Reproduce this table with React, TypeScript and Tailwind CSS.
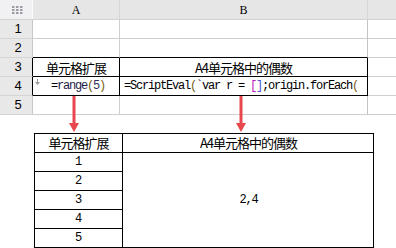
const cjk = "font-['Noto_Sans_CJK_SC',sans-serif]";
const mono = "font-['Liberation_Mono',monospace] tracking-[-1.2px]";

function CornerDots() {
  return (
    <svg width="11" height="8" viewBox="0 0 11 8" className="mt-[1px]">
      {[0, 1, 2].map((r) =>
        [0, 1, 2].map((c) => (
          <rect key={`${r}-${c}`} x={c * 4} y={r * 3} width="2.5" height="2" fill="#9c9ca4" />
        ))
      )}
    </svg>
  );
}

function Arrow({ x }: { x: number }) {
  return (
    <svg
      className="absolute top-[96px]"
      style={{ left: x - 6 }}
      width="12"
      height="37"
      viewBox="0 0 12 37"
    >
      <rect x="4.5" y="0" width="3" height="29" fill="#e8474d" />
      <polygon points="1,27 11,27 6,36" fill="#e8474d" />
    </svg>
  );
}

function RowHead({ n, dark }: { n: number; dark?: boolean }) {
  return (
    <div
      className={`w-[33px] h-full flex items-center justify-center pl-1 bg-[#e8e8e8] border-b border-b-[#d4d4d4] border-r ${
        dark ? "border-r-black" : "border-r-[#c8c8c8]"
      } font-['Liberation_Sans',sans-serif] text-[13px] text-black`}
    >
      {n}
    </div>
  );
}

function Row({ n, a, b, box }: { n: number; a?: React.ReactNode; b?: React.ReactNode; box?: "top" | "mid" | "bot" }) {
  const inBox = box === "mid" || box === "bot";
  const bottomBlack = box !== undefined;
  return (
    <div className="flex h-[19px]">
      <RowHead n={n} dark={inBox} />
      <div
        className={`w-[87px] h-full border-b border-r ${bottomBlack ? "border-b-black" : "border-b-[#cfcfcf]"} ${
          inBox ? "border-r-black" : "border-r-[#cfcfcf]"
        } relative overflow-hidden flex items-center justify-center`}
      >
        {a}
      </div>
      <div
        className={`w-[248px] h-full border-b border-r ${bottomBlack ? "border-b-black" : "border-b-[#cfcfcf]"} ${
          inBox ? "border-r-black" : "border-r-[#c4c4c4]"
        } overflow-hidden flex items-center`}
      >
        {b}
      </div>
      <div className="flex-1 h-full border-b border-b-[#cfcfcf]" />
    </div>
  );
}

export default function App() {
  return (
    <div className="relative w-[396px] h-[248px] bg-white overflow-hidden text-black">
      {/* sheet */}
      <div className="flex flex-col">
        <div className="flex h-[20px] bg-[#e6e6e6] border-b border-b-[#d2d2d2]">
          <div className="w-[33px] h-full bg-[#f1f1f4] border-r border-r-[#fafafa] flex items-center justify-center pl-[2px]">
            <CornerDots />
          </div>
          <div className="w-[87px] h-full border-r border-r-[#d6d6d6] flex items-center justify-center font-['Liberation_Serif',serif] text-[12px]">
            A
          </div>
          <div className="w-[248px] h-full border-r border-r-[#d6d6d6] flex items-center justify-center font-['Liberation_Serif',serif] text-[12px]">
            B
          </div>
          <div className="flex-1" />
        </div>
        <Row n={1} />
        <Row n={2} box="top" />
        <Row
          n={3}
          box="mid"
          a={<span className={`${cjk} text-[13px] tracking-[-1px] leading-none`}>单元格扩展</span>}
          b={
            <span className={`${cjk} text-[13px] tracking-[-1px] leading-none w-full text-center`}>
              A4单元格中的偶数
            </span>
          }
        />
        <Row
          n={4}
          box="bot"
          a={
            <>
              <svg className="absolute left-[2px] top-[2px]" width="5" height="6" viewBox="0 0 5 6">
                <rect x="2" y="0" width="1" height="4" fill="#9a9a9a" />
                <polygon points="0,3 5,3 2.5,6" fill="#9a9a9a" />
              </svg>
              <span className={`${mono} text-[12px] leading-none pl-[4px]`}>
                =<span className="text-[#1c1c48]">range</span>
                <span className="text-[#7a5c10]">(</span>
                <span className="text-[#303060]">5</span>
                <span className="text-[#7a5c10]">)</span>
              </span>
            </>
          }
          b={
            <span className={`${mono} text-[12px] leading-none whitespace-nowrap pl-[4px]`}>
              =ScriptEval<span className="text-[#7a5c10]">(</span>`var r = <span className="text-[#c010c0]">[</span>
              <span className="text-[#5050e0]">]</span>;origin.forEach<span className="text-[#7a5c10]">(</span>
            </span>
          }
        />
        <div className="flex h-[19px]">
          <RowHead n={5} />
          <div className="w-[87px] h-full border-b border-r border-b-[#cfcfcf] border-r-[#cfcfcf]" />
          <div className="w-[248px] h-full border-b border-r border-b-[#cfcfcf] border-r-[#c4c4c4]" />
          <div className="flex-1 h-full border-b border-b-[#cfcfcf]" />
        </div>
      </div>

      {/* result table */}
      <div className="ml-[34px] mt-[18px] w-[340px] grid grid-cols-[88px_251px] grid-rows-[19px_19px_19px_19px_19px_18px] border border-black text-[12px]">
        <div className={`flex items-center justify-center border-r border-b border-black ${cjk} text-[13px] tracking-[-1px]`}>
          单元格扩展
        </div>
        <div className={`flex items-center justify-center border-b border-black ${cjk} text-[13px] tracking-[-1px]`}>
          A4单元格中的偶数
        </div>
        {[1, 2, 3, 4, 5].map((n, i) => (
          <div
            key={n}
            className={`col-start-1 flex items-center justify-center border-r border-black ${i < 4 ? "border-b" : ""} font-['Liberation_Mono',monospace]`}
            style={{ gridRowStart: i + 2 }}
          >
            {n}
          </div>
        ))}
        <div className={`col-start-2 row-start-2 row-span-5 flex items-center justify-center ${mono}`}>2,4</div>
      </div>

      <Arrow x={74} />
      <Arrow x={241} />
    </div>
  );
}
